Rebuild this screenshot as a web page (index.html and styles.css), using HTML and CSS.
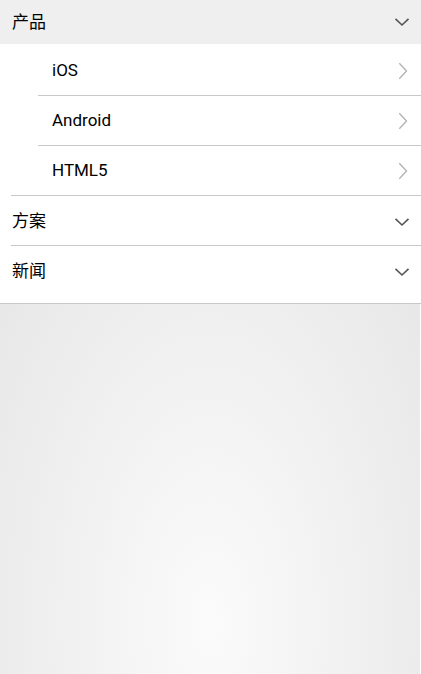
FILE: index.html
```html
<!DOCTYPE html>
<html lang="zh-CN">
<head>
<meta charset="utf-8">
<title>列表</title>
<link rel="stylesheet" href="styles.css">
</head>
<body>
<ul class="menu">
  <li class="group open">
    <div class="group-head head-active">
      <span class="label">产品</span>
      <svg class="chev-down" width="16" height="10" viewBox="0 0 16 10"><path d="M1.5 1.8 L8 8 L14.5 1.8" fill="none" stroke="#555" stroke-width="1.6"/></svg>
    </div>
    <ul class="sub">
      <li class="sub-item"><span class="label">iOS</span><svg class="chev-right" width="10" height="18" viewBox="0 0 10 18"><path d="M1.3 1.3 L8.5 9 L1.3 16.7" fill="none" stroke="#b4b4b4" stroke-width="1.4"/></svg></li>
      <li class="sub-item"><span class="label">Android</span><svg class="chev-right" width="10" height="18" viewBox="0 0 10 18"><path d="M1.3 1.3 L8.5 9 L1.3 16.7" fill="none" stroke="#b4b4b4" stroke-width="1.4"/></svg></li>
      <li class="sub-item"><span class="label">HTML5</span><svg class="chev-right" width="10" height="18" viewBox="0 0 10 18"><path d="M1.3 1.3 L8.5 9 L1.3 16.7" fill="none" stroke="#b4b4b4" stroke-width="1.4"/></svg></li>
    </ul>
  </li>
  <li class="group">
    <div class="group-head">
      <span class="label">方案</span>
      <svg class="chev-down" width="16" height="10" viewBox="0 0 16 10"><path d="M1.5 1.8 L8 8 L14.5 1.8" fill="none" stroke="#555" stroke-width="1.6"/></svg>
    </div>
  </li>
  <li class="group last">
    <div class="group-head">
      <span class="label">新闻</span>
      <svg class="chev-down" width="16" height="10" viewBox="0 0 16 10"><path d="M1.5 1.8 L8 8 L14.5 1.8" fill="none" stroke="#555" stroke-width="1.6"/></svg>
    </div>
  </li>
</ul>
<div class="backdrop"></div>
</body>
</html>
```

FILE: styles.css
```css
html, body {
  margin: 0;
  padding: 0;
  height: 100%;
  background: #ffffff;
}
body {
  display: flex;
  flex-direction: column;
  font-family: Roboto, "Noto Sans CJK SC", "Noto Sans", sans-serif;
  font-size: 17px;
  color: #000;
}
ul {
  list-style: none;
  margin: 0;
  padding: 0;
}
.menu {
  background: #fff;
  border-bottom: 1px solid #c8c8c8;
}
.group {
  position: relative;
}
.group::after {
  content: "";
  position: absolute;
  left: 11px;
  right: 0;
  bottom: 0;
  height: 1px;
  background: #c8c8c8;
}
.group.last::after {
  display: none;
}
.group.last {
  padding-bottom: 7px;
}
.group + .group {
  padding-top: 1px;
}
.group-head {
  height: 49px;
  display: flex;
  align-items: center;
  justify-content: space-between;
  padding: 0 11px 0 12px;
}
.head-active {
  height: 44px;
  background: #efefef;
}
.sub {
  padding-top: 2px;
  padding-bottom: 1px;
}
.sub-item {
  box-sizing: border-box;
  height: 50px;
  margin-left: 38px;
  padding: 0 13px 0 14px;
  display: flex;
  align-items: center;
  justify-content: space-between;
  border-bottom: 1px solid #c8c8c8;
}
.sub-item:last-child {
  border-bottom: none;
  height: 49px;
}
.label {
  line-height: 21px;
}
.chev-down,
.chev-right {
  display: block;
}
.backdrop {
  flex: 1;
  margin-right: 1px;
  background: radial-gradient(ellipse 265px 510px at 50% 86%, #fbfbfb 0%, #e8e8e8 100%);
}
```
